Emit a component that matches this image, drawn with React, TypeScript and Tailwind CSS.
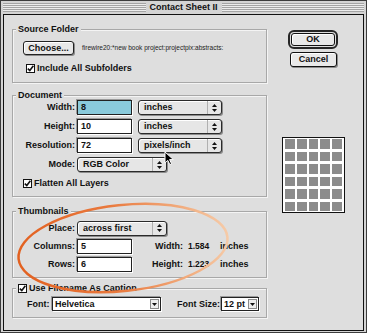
import React from "react";

const BG = "bg-[#dedede]";

function Check() {
  return (
    <span className="inline-flex w-[9px] h-[9px] border border-[#111] bg-white items-center justify-center shrink-0">
      <svg width="7" height="7" viewBox="0 0 7 7">
        <path d="M0.8 3.6 L2.8 5.6 L6.4 0.8" stroke="#111" strokeWidth="1.6" fill="none" />
      </svg>
    </span>
  );
}

function UpDown() {
  return (
    <svg width="5" height="8" viewBox="0 0 5 8">
      <path d="M2.5 0 L5 3 L0 3 Z" fill="#111" />
      <path d="M0 5 L5 5 L2.5 8 Z" fill="#111" />
    </svg>
  );
}

function Popup({ text, className }: { text: string; className: string }) {
  return (
    <div
      className={`flex items-center h-[15px] border border-[#2a2a2a] rounded-[3px] bg-[#e6e6e6] shadow-[1px_1px_0_#8c8c8c,inset_1px_1px_0_#fff] ${className}`}
    >
      <span className="flex-1 pl-[5px] text-[9px] font-bold leading-none text-[#111] whitespace-nowrap overflow-hidden">
        {text}
      </span>
      <span className="w-[14px] h-full border-l border-[#b0b0b0] flex items-center justify-center">
        <UpDown />
      </span>
    </div>
  );
}

function Field({ text, className }: { text: string; className: string }) {
  return (
    <div
      className={`flex items-center h-[15px] border border-[#222] shadow-[-1px_-1px_0_#9a9a9a,1px_1px_0_#fff] ${className}`}
    >
      <span className="pl-[3px] text-[9px] font-bold leading-none text-[#111]">{text}</span>
    </div>
  );
}

function Combo({ text, className }: { text: string; className: string }) {
  return (
    <div
      className={`flex items-center h-[14px] border border-[#222] bg-white shadow-[-1px_-1px_0_#9a9a9a,1px_1px_0_#fff] ${className}`}
    >
      <span className="flex-1 pl-[2px] text-[9px] font-bold leading-none text-[#111] whitespace-nowrap">{text}</span>
      <span className="w-[9px] h-[10px] mr-[1px] border border-[#8a8a8a] bg-[#eeeeee] flex items-center justify-center shrink-0">
        <svg width="5" height="3" viewBox="0 0 5 3">
          <path d="M0 0 L5 0 L2.5 3 Z" fill="#111" />
        </svg>
      </span>
    </div>
  );
}

function Label({ text, className }: { text: string; className: string }) {
  return (
    <span className={`text-[9px] font-bold leading-none text-[#111] whitespace-nowrap ${className}`}>{text}</span>
  );
}

function Group({
  title,
  className,
  children,
}: {
  title: React.ReactNode;
  className: string;
  children: React.ReactNode;
}) {
  return (
    <div
      className={`relative border border-[#a8a8a8] shadow-[inset_1px_1px_0_#f4f4f4,1px_1px_0_#f4f4f4] ${className}`}
    >
      <div className={`absolute left-[3px] top-[-7px] px-[2px] h-[12px] flex items-center ${BG}`}>{title}</div>
      {children}
    </div>
  );
}

export default function App() {
  return (
    <div className="relative w-[367px] h-[333px] overflow-hidden font-['Liberation_Sans',Arial,sans-serif] text-[#111]">
      <div className="w-full h-full border border-[#3c3c3c] bg-[#d4d4d4] px-[2px] pb-[1px] flex flex-col">
        {/* title bar */}
        <div className="h-[13px] flex items-center shrink-0">
          <div className="flex-1 h-[9px] bg-[repeating-linear-gradient(to_bottom,#a4a4a4_0px,#a4a4a4_1px,#ececec_1px,#ececec_2px)]" />
          <span className="px-[4px] text-[9px] font-bold leading-none">Contact Sheet II</span>
          <div className="flex-1 h-[9px] bg-[repeating-linear-gradient(to_bottom,#a4a4a4_0px,#a4a4a4_1px,#ececec_1px,#ececec_2px)]" />
        </div>
        {/* content */}
        <div className={`flex-1 border border-[#111] ${BG} flex`}>
          {/* left column */}
          <div className="w-[263px] pl-[8px] flex flex-col">
            <Group title={<Label text="Source Folder" className="" />} className="mt-[14px] h-[54px]">
              <div className="pt-[11px] pl-[10px] flex flex-col">
                <div className="flex items-center h-[14px]">
                  <div className="w-[51px] h-[14px] border border-[#222] rounded-[3px] bg-[#e8e8e8] shadow-[1px_1px_0_#8c8c8c,inset_1px_1px_0_#fff] flex items-center justify-center">
                    <Label text="Choose..." className="" />
                  </div>
                  <span className="ml-[8px] text-[6.5px] leading-none text-[#222] whitespace-nowrap">
                    firewire20:*new book project:projectpix:abstracts:
                  </span>
                </div>
                <div className="mt-[7px] h-[12px] flex items-center pl-[3px] gap-[2px]">
                  <Check />
                  <Label text="Include All Subfolders" className="" />
                </div>
              </div>
            </Group>

            <Group title={<Label text="Document" className="" />} className="mt-[12px] h-[102px]">
              <div className="pt-[2px] flex flex-col">
                <div className="h-[19px] flex items-center">
                  <Label text="Width:" className="w-[62px] text-right" />
                  <Field text="8" className="ml-[2px] w-[55px] bg-[#8acbdc]" />
                  <Popup text="inches" className="ml-[6px] w-[84px]" />
                </div>
                <div className="h-[19px] flex items-center">
                  <Label text="Height:" className="w-[62px] text-right" />
                  <Field text="10" className="ml-[2px] w-[55px] bg-white" />
                  <Popup text="inches" className="ml-[6px] w-[84px]" />
                </div>
                <div className="h-[19px] flex items-center">
                  <Label text="Resolution:" className="w-[62px] text-right" />
                  <Field text="72" className="ml-[2px] w-[55px] bg-white" />
                  <Popup text="pixels/inch" className="ml-[6px] w-[84px]" />
                </div>
                <div className="h-[19px] flex items-center">
                  <Label text="Mode:" className="w-[62px] text-right" />
                  <Popup text="RGB Color" className="ml-[2px] w-[90px]" />
                </div>
                <div className="h-[19px] flex items-center pl-[10px] gap-[2px]">
                  <Check />
                  <Label text="Flatten All Layers" className="" />
                </div>
              </div>
            </Group>

            <Group title={<Label text="Thumbnails" className="" />} className="mt-[14px] h-[67px]">
              <div className="pt-[7px] flex flex-col">
                <div className="h-[18px] flex items-center">
                  <Label text="Place:" className="w-[62px] text-right" />
                  <Popup text="across first" className="ml-[2px] w-[90px]" />
                </div>
                <div className="h-[18px] flex items-center">
                  <Label text="Columns:" className="w-[62px] text-right" />
                  <Field text="5" className="ml-[2px] w-[55px] bg-white" />
                  <Label text="Width:" className="w-[51px] text-right" />
                  <span className="ml-[5px] w-[32px] text-[8.5px] font-bold leading-none">1.584</span>
                  <Label text="inches" className="" />
                </div>
                <div className="h-[18px] flex items-center">
                  <Label text="Rows:" className="w-[62px] text-right" />
                  <Field text="6" className="ml-[2px] w-[55px] bg-white" />
                  <Label text="Height:" className="w-[51px] text-right" />
                  <span className="ml-[5px] w-[32px] text-[8.5px] font-bold leading-none">1.223</span>
                  <Label text="inches" className="" />
                </div>
              </div>
            </Group>

            <Group
              title={
                <span className="flex items-center gap-[2px]">
                  <Check />
                  <Label text="Use Filename As Caption" className="" />
                </span>
              }
              className="mt-[10px] h-[30px]"
            >
              <div className="pt-[8px] pl-[14px] flex items-center h-[22px]">
                <Label text="Font:" className="w-[25px]" />
                <Combo text="Helvetica" className="w-[109px]" />
                <Label text="Font Size:" className="ml-[16px] w-[44px]" />
                <Combo text="12 pt" className="w-[38px]" />
              </div>
            </Group>
          </div>

          {/* right column */}
          <div className="flex-1 pl-[15px] pt-[15px] flex flex-col items-start">
            <div className="ml-[6px] w-[50px] h-[19px] border-[2px] border-[#262626] rounded-[6px] p-[1px]">
              <div className="w-full h-full border border-[#111] rounded-[3px] bg-[#e9e9e9] shadow-[inset_1px_1px_0_#fff] flex items-center justify-center">
                <Label text="OK" className="" />
              </div>
            </div>
            <div className="ml-[8px] mt-[3px] w-[47px] h-[15px] border border-[#111] rounded-[3px] bg-[#e9e9e9] shadow-[1px_1px_0_#8c8c8c,inset_1px_1px_0_#fff] flex items-center justify-center">
              <Label text="Cancel" className="" />
            </div>
            <div className="mt-[70px] w-[63px] h-[76px] border border-[#111] bg-white px-[2px] py-[1px] grid grid-cols-5 grid-rows-6 gap-x-[2px] gap-y-[3px]">
              {Array.from({ length: 30 }).map((_, i) => (
                <div key={i} className="bg-[#8c8c8c]" />
              ))}
            </div>
          </div>
        </div>
      </div>

      {/* mouse cursor */}
      <svg className="absolute left-[164px] top-[151px]" width="11" height="15" viewBox="0 0 11 15">
        <path d="M1 1 L1 12 L3.8 9.4 L5.8 13.6 L7.6 12.8 L5.6 8.6 L9.4 8.6 Z" fill="#000" stroke="#fff" strokeWidth="1" />
      </svg>

      {/* orange annotation ellipse */}
      <svg className="absolute left-0 top-0 pointer-events-none" width="367" height="333" viewBox="0 0 367 333">
        <defs>
          <linearGradient id="og" x1="15" y1="0" x2="235" y2="0" gradientUnits="userSpaceOnUse">
            <stop offset="0" stopColor="#e2601f" />
            <stop offset="0.45" stopColor="#e9793d" />
            <stop offset="0.8" stopColor="#f2b083" />
            <stop offset="1" stopColor="#f6cfae" />
          </linearGradient>
        </defs>
        <ellipse
          cx="123"
          cy="248"
          rx="105"
          ry="43"
          transform="rotate(-6 123 248)"
          fill="none"
          stroke="url(#og)"
          strokeWidth="2.5"
        />
      </svg>
    </div>
  );
}
